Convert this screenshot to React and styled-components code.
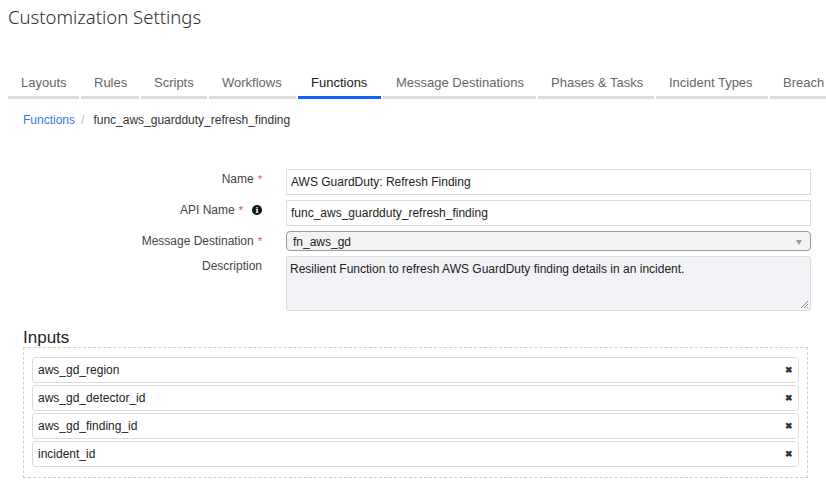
import React from 'react';
import styled, { createGlobalStyle } from 'styled-components';

const GlobalStyle = createGlobalStyle`
  body {
    margin: 0;
    background: #fff;
    font-family: "Liberation Sans", Arial, sans-serif;
    color: #333;
  }
`;

const Page = styled.div`
  padding: 0 8px;
  width: 826px;
  box-sizing: border-box;
  overflow: hidden;
`;

const Title = styled.h1`
  margin: 0;
  padding-top: 4px;
  font-family: "Noto Sans", "Open Sans", sans-serif;
  font-size: 18.5px;
  line-height: 26px;
  font-weight: 300;
  color: #2d2d2d;
`;

const Tabs = styled.div`
  display: flex;
  gap: 2px;
  margin-top: 39px;
  white-space: nowrap;
`;

const Tab = styled.div`
  flex: none;
  width: ${p => p.w}px;
  box-sizing: border-box;
  padding-left: 13px;
  height: 30px;
  line-height: 28px;
  font-size: 13px;
  color: ${p => (p.active ? '#222' : '#666')};
  border-bottom: 3px solid ${p => (p.active ? '#0f62fe' : '#dcdcdc')};
`;

const Crumbs = styled.div`
  display: flex;
  align-items: center;
  gap: 6px;
  padding: 13px 0 0 15px;
  font-size: 12px;
  line-height: 16px;
`;

const CrumbLink = styled.span`
  color: #3b78e7;
`;

const Sep = styled.span`
  color: #bbb;
  margin-right: 3px;
`;

const Form = styled.div`
  display: grid;
  grid-template-columns: 254px 525px;
  column-gap: 24px;
  row-gap: 5px;
  margin-top: 41px;
`;

const Label = styled.div`
  display: flex;
  justify-content: flex-end;
  align-items: center;
  gap: 4px;
  padding-top: 2px;
  height: 16px;
  font-size: 12px;
  color: #444;
`;

const Star = styled.span`
  color: #e5484d;
  font-size: 11px;
`;

const InfoIcon = styled.span`
  display: inline-flex;
  align-items: center;
  justify-content: center;
  width: 10px;
  height: 10px;
  margin-left: 5px;
  border-radius: 50%;
  background: #111;
  color: #fff;
  font-size: 8px;
  font-weight: 700;
  font-family: "DejaVu Serif", serif;
`;

const TextBox = styled.div`
  height: 26px;
  box-sizing: border-box;
  border: 1px solid #dcdcdc;
  padding: 0 4px;
  line-height: 24px;
  font-size: 12px;
  color: #222;
`;

const Select = styled.div`
  display: flex;
  justify-content: space-between;
  align-items: center;
  height: 20px;
  box-sizing: border-box;
  border: 1px solid #9a9a9a;
  border-radius: 4px;
  background: #f2f3f5;
  padding: 2px 8px 0 6px;
  font-size: 12px;
  color: #222;
`;

const Caret = styled.span`
  width: 0;
  height: 0;
  border-left: 3px solid transparent;
  border-right: 3px solid transparent;
  border-top: 5px solid #999;
`;

const Area = styled.div`
  position: relative;
  height: 55px;
  box-sizing: border-box;
  border: 1px solid #dcdcdc;
  border-radius: 2px;
  background: #f2f3f6;
  padding: 4px 3px;
  font-size: 12px;
  line-height: 16px;
  color: #222;
`;

const Grip = styled.svg`
  position: absolute;
  right: 1px;
  bottom: 1px;
`;

const InputsTitle = styled.h2`
  margin: 18px 0 0 15px;
  font-size: 17px;
  line-height: 18px;
  font-weight: 400;
  color: #222;
`;

const Box = styled.div`
  margin: 0 0 0 15px;
  width: 785px;
  box-sizing: border-box;
  border: 1px dashed #cfcfcf;
  padding: 9px 8px 10px 8px;
  display: flex;
  flex-direction: column;
  gap: 2px;
`;

const Row = styled.div`
  display: flex;
  justify-content: space-between;
  align-items: center;
  height: 26px;
  box-sizing: border-box;
  border: 1px solid #dcdcdc;
  border-radius: 3px;
  padding: 0 5px;
  font-size: 12px;
  color: #222;
`;

const Remove = styled.span`
  font-size: 9px;
  font-weight: 700;
  color: #333;
`;

const tabs = [
  ['Layouts', 71], ['Rules', 58], ['Scripts', 66], ['Workflows', 87], ['Functions', 83],
  ['Message Destinations', 153], ['Phases & Tasks', 116], ['Incident Types', 112], ['Breach', 80],
];
const inputs = ['aws_gd_region', 'aws_gd_detector_id', 'aws_gd_finding_id', 'incident_id'];

export default function App() {
  return (
    <Page>
      <GlobalStyle />
      <Title>Customization Settings</Title>
      <Tabs>
        {tabs.map(([t, w]) => <Tab key={t} w={w} active={t === 'Functions'}>{t}</Tab>)}
      </Tabs>
      <Crumbs>
        <CrumbLink>Functions</CrumbLink>
        <Sep>/</Sep>
        <span>func_aws_guardduty_refresh_finding</span>
      </Crumbs>
      <Form>
        <Label>Name <Star>*</Star></Label>
        <TextBox>AWS GuardDuty: Refresh Finding</TextBox>
        <Label>API Name <Star>*</Star><InfoIcon>i</InfoIcon></Label>
        <TextBox>func_aws_guardduty_refresh_finding</TextBox>
        <Label>Message Destination <Star>*</Star></Label>
        <Select>fn_aws_gd<Caret /></Select>
        <Label>Description</Label>
        <Area>
          Resilient Function to refresh AWS GuardDuty finding details in an incident.
          <Grip width="10" height="10" viewBox="0 0 10 10">
            <path d="M9 2L2 9M9 5L5 9M9 8L8 9" stroke="#888" strokeWidth="1" />
          </Grip>
        </Area>
      </Form>
      <InputsTitle>Inputs</InputsTitle>
      <Box>
        {inputs.map(i => (
          <Row key={i}>{i}<Remove>✖</Remove></Row>
        ))}
      </Box>
    </Page>
  );
}
